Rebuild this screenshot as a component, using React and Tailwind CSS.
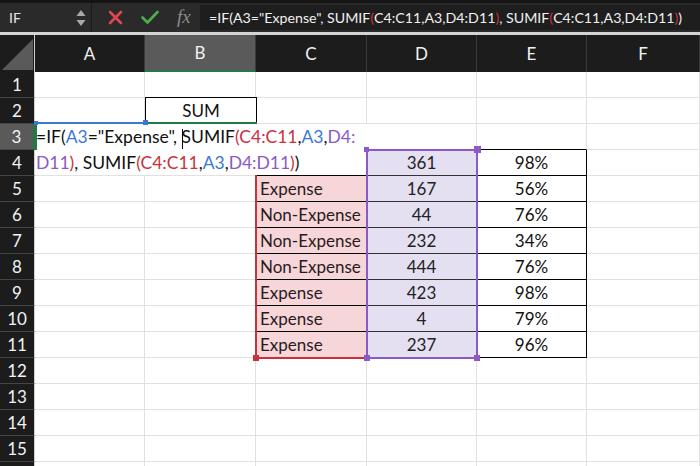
import React from "react";

const COLS = [
  { k: "A", w: "w-[110px]" },
  { k: "B", w: "w-[111px]" },
  { k: "C", w: "w-[111px]" },
  { k: "D", w: "w-[110px]" },
  { k: "E", w: "w-[110px]" },
  { k: "F", w: "w-[113px]" },
];

const DATA = {
  4: { C: "", D: "361", E: "98%" },
  5: { C: "Expense", D: "167", E: "56%" },
  6: { C: "Non-Expense", D: "44", E: "76%" },
  7: { C: "Non-Expense", D: "232", E: "34%" },
  8: { C: "Non-Expense", D: "444", E: "76%" },
  9: { C: "Expense", D: "423", E: "98%" },
  10: { C: "Expense", D: "4", E: "79%" },
  11: { C: "Expense", D: "237", E: "96%" },
};

const FONT = "font-['Lato','Noto_Sans',sans-serif]";

function Cell({ row, col }) {
  const d = DATA[row];
  let cls = "h-[26px] shrink-0 border-r border-b border-[#e1e1e1] flex items-center text-[17px] text-[#111] ";
  let content = null;
  if (d && col.k === "C") {
    cls = "h-[26px] shrink-0 border-r border-b border-r-[#e1e1e1] border-b-black flex items-center text-[17px] text-[#2a1a1c] pl-[4px] " + (d.C ? "bg-[#f6d6d9] " : "");
    content = d.C;
  } else if (d && col.k === "D") {
    cls = "h-[26px] shrink-0 border-r border-b border-r-[#e1e1e1] border-b-[#333] flex items-center justify-center text-[17px] text-[#222] bg-[#e4e0f1] ";
    content = d.D;
  } else if (d && col.k === "E") {
    cls = "h-[26px] shrink-0 border-r border-b border-black flex items-center justify-center text-[17px] text-[#111] ";
    content = d.E;
  } else if (row === 3 && col.k === "E") {
    cls = "h-[26px] shrink-0 border-r border-b border-r-[#e1e1e1] border-b-black ";
  }
  return <div className={cls + col.w}>{content}</div>;
}

function Row({ n }) {
  const sel = n === 3;
  return (
    <div className="flex">
      <div
        className={
          "w-[35px] h-[26px] shrink-0 flex items-center justify-center text-[17px] text-[#f2f2f2] border-b border-[#454545] " +
          (sel ? "bg-[#5a5a5a] border-r-2 border-r-[#1f7a45]" : "bg-[#1c1c1c] border-r border-r-[#d0d0d0]")
        }
      >
        {n <= 15 ? n : null}
      </div>
      {COLS.map((c) => (
        <Cell key={c.k} row={n} col={c} />
      ))}
    </div>
  );
}

const R = "text-[#c9323b]";
const BL = "text-[#3a78d6]";
const P = "text-[#8b5ac8]";

export default function App() {
  const rows = Array.from({ length: 16 }, (_, i) => i + 1);
  return (
    <div className={"relative w-[700px] h-[466px] overflow-hidden bg-white " + FONT}>
      {/* formula bar */}
      <div className="h-[3px] bg-[#151515]" />
      <div className="h-[29px] bg-[#2a2a2a] flex items-stretch">
        <div className="w-[92px] flex items-center justify-between pl-[9px] pr-[4px] border-r border-[#1a1a1a]">
          <span className="text-[14px] text-[#e6e6e6]">IF</span>
          <svg width="12" height="22" viewBox="0 0 12 22">
            <path d="M6 3 L10.5 9 L1.5 9 Z" fill="#a9a9a9" />
            <path d="M6 19 L10.5 13 L1.5 13 Z" fill="#a9a9a9" />
          </svg>
        </div>
        <div className="w-[108px] flex items-center pl-[16px] gap-[18px]">
          <svg width="15" height="15" viewBox="0 0 15 15">
            <path d="M2 2 L13 13 M13 2 L2 13" stroke="#e2474f" strokeWidth="2.6" strokeLinecap="round" />
          </svg>
          <svg width="18" height="15" viewBox="0 0 18 15">
            <path d="M1.5 7.5 L6.5 12.5 L16.5 2" stroke="#4cae4f" strokeWidth="2.6" fill="none" strokeLinecap="round" strokeLinejoin="round" />
          </svg>
          <span className="font-['Liberation_Serif',serif] italic text-[19px] text-[#8a8a8a] leading-none -mt-[2px]">fx</span>
        </div>
        <div className="flex-1 my-[2px] bg-[#1e1e1e] flex items-center pl-[9px] text-[14.2px] text-[#f0f0f0] whitespace-nowrap">
          =IF(A3="Expense", SUMIF<span className={R}>(</span>C4:C11,A3,D4:D11<span className={R}>)</span>, SUMIF<span className={R}>(</span>C4:C11,A3,D4:D11<span className={R}>)</span>)
        </div>
      </div>
      <div className="h-[3px] bg-[#d4d4d4]" />

      {/* column headers */}
      <div className="flex h-[37px] bg-[#1c1c1c]">
        <div className="w-[35px] shrink-0 border-r border-[#cfcfcf] flex items-end justify-end pr-[1px] pb-[2px]">
          <svg width="31" height="31" viewBox="0 0 31 31">
            <path d="M31 0 L31 31 L0 31 Z" fill="#5a5a5a" />
          </svg>
        </div>
        {COLS.map((c) => (
          <div
            key={c.k}
            className={
              "shrink-0 flex items-center justify-center text-[17px] text-[#f2f2f2] border-r border-[#3a3a3a] " +
              c.w +
              (c.k === "B" ? " bg-[#5a5a5a] border-b-2 border-b-[#1f7a45]" : "")
            }
          >
            {c.k}
          </div>
        ))}
      </div>

      {/* grid */}
      <div className="flex flex-col">
        {rows.map((n) => (
          <Row key={n} n={n} />
        ))}
      </div>

      {/* B2 SUM box */}
      <div className="absolute left-[145px] top-[97px] w-[112px] h-[27px] border border-black flex items-center justify-center text-[17px] text-[#111] bg-white">
        SUM
      </div>

      {/* editing overlay A3:C4 */}
      <div className="absolute left-[35px] top-[124px] w-[332px] h-[51px] bg-white text-[17.5px] text-[#111] whitespace-nowrap">
        <div className="h-[26px] leading-[26px] pl-[1px]">
          =IF(<span className={BL}>A3</span>="Expense",{" "}
          <span className="inline-block w-[1px] h-[20px] bg-black align-middle -mr-[1px]" />
          SUMIF<span className={R}>(C4:C11</span>,<span className={BL}>A3</span>,<span className={P}>D4:</span>
        </div>
        <div className="h-[25px] leading-[25px] pl-[1px]">
          <span className={P}>D11</span><span className={R}>)</span>, SUMIF<span className={R}>(C4:C11</span>,<span className={BL}>A3</span>,<span className={P}>D4:D11</span><span className={R}>)</span>)
        </div>
      </div>
      {/* active cell green edges */}
      <div className="absolute left-[35px] top-[124px] w-[2px] h-[26px] bg-[#1f7a45]" />
      <div className="absolute left-[147px] top-[122px] w-[110px] h-[2px] bg-[#1f7a45]" />
      {/* blue A3 highlight */}
      <div className="absolute left-[35px] top-[122px] w-[110px] h-[2px] bg-[#3a78d6]" />
      <div className="absolute left-[34px] top-[121px] w-[4px] h-[4px] bg-[#3a78d6]" />
      <div className="absolute left-[143px] top-[120px] w-[5px] h-[5px] bg-[#3a78d6]" />

      {/* red C range */}
      <div className="absolute left-[255px] top-[175px] w-[2px] h-[184px] bg-[#c9323b]" />
      <div className="absolute left-[255px] top-[357px] w-[112px] h-[2px] bg-[#c9323b]" />
      <div className="absolute left-[253px] top-[355px] w-[6px] h-[6px] bg-[#c9323b]" />

      {/* purple D range */}
      <div className="absolute left-[366px] top-[149px] w-[112px] h-[210px] border-2 border-[#8b5ac8]" />
      <div className="absolute left-[364px] top-[147px] w-[5px] h-[5px] bg-[#8b5ac8]" />
      <div className="absolute left-[474px] top-[146px] w-[7px] h-[7px] bg-[#8b5ac8]" />
      <div className="absolute left-[364px] top-[355px] w-[6px] h-[6px] bg-[#8b5ac8]" />
      <div className="absolute left-[474px] top-[355px] w-[6px] h-[6px] bg-[#8b5ac8]" />
    </div>
  );
}
